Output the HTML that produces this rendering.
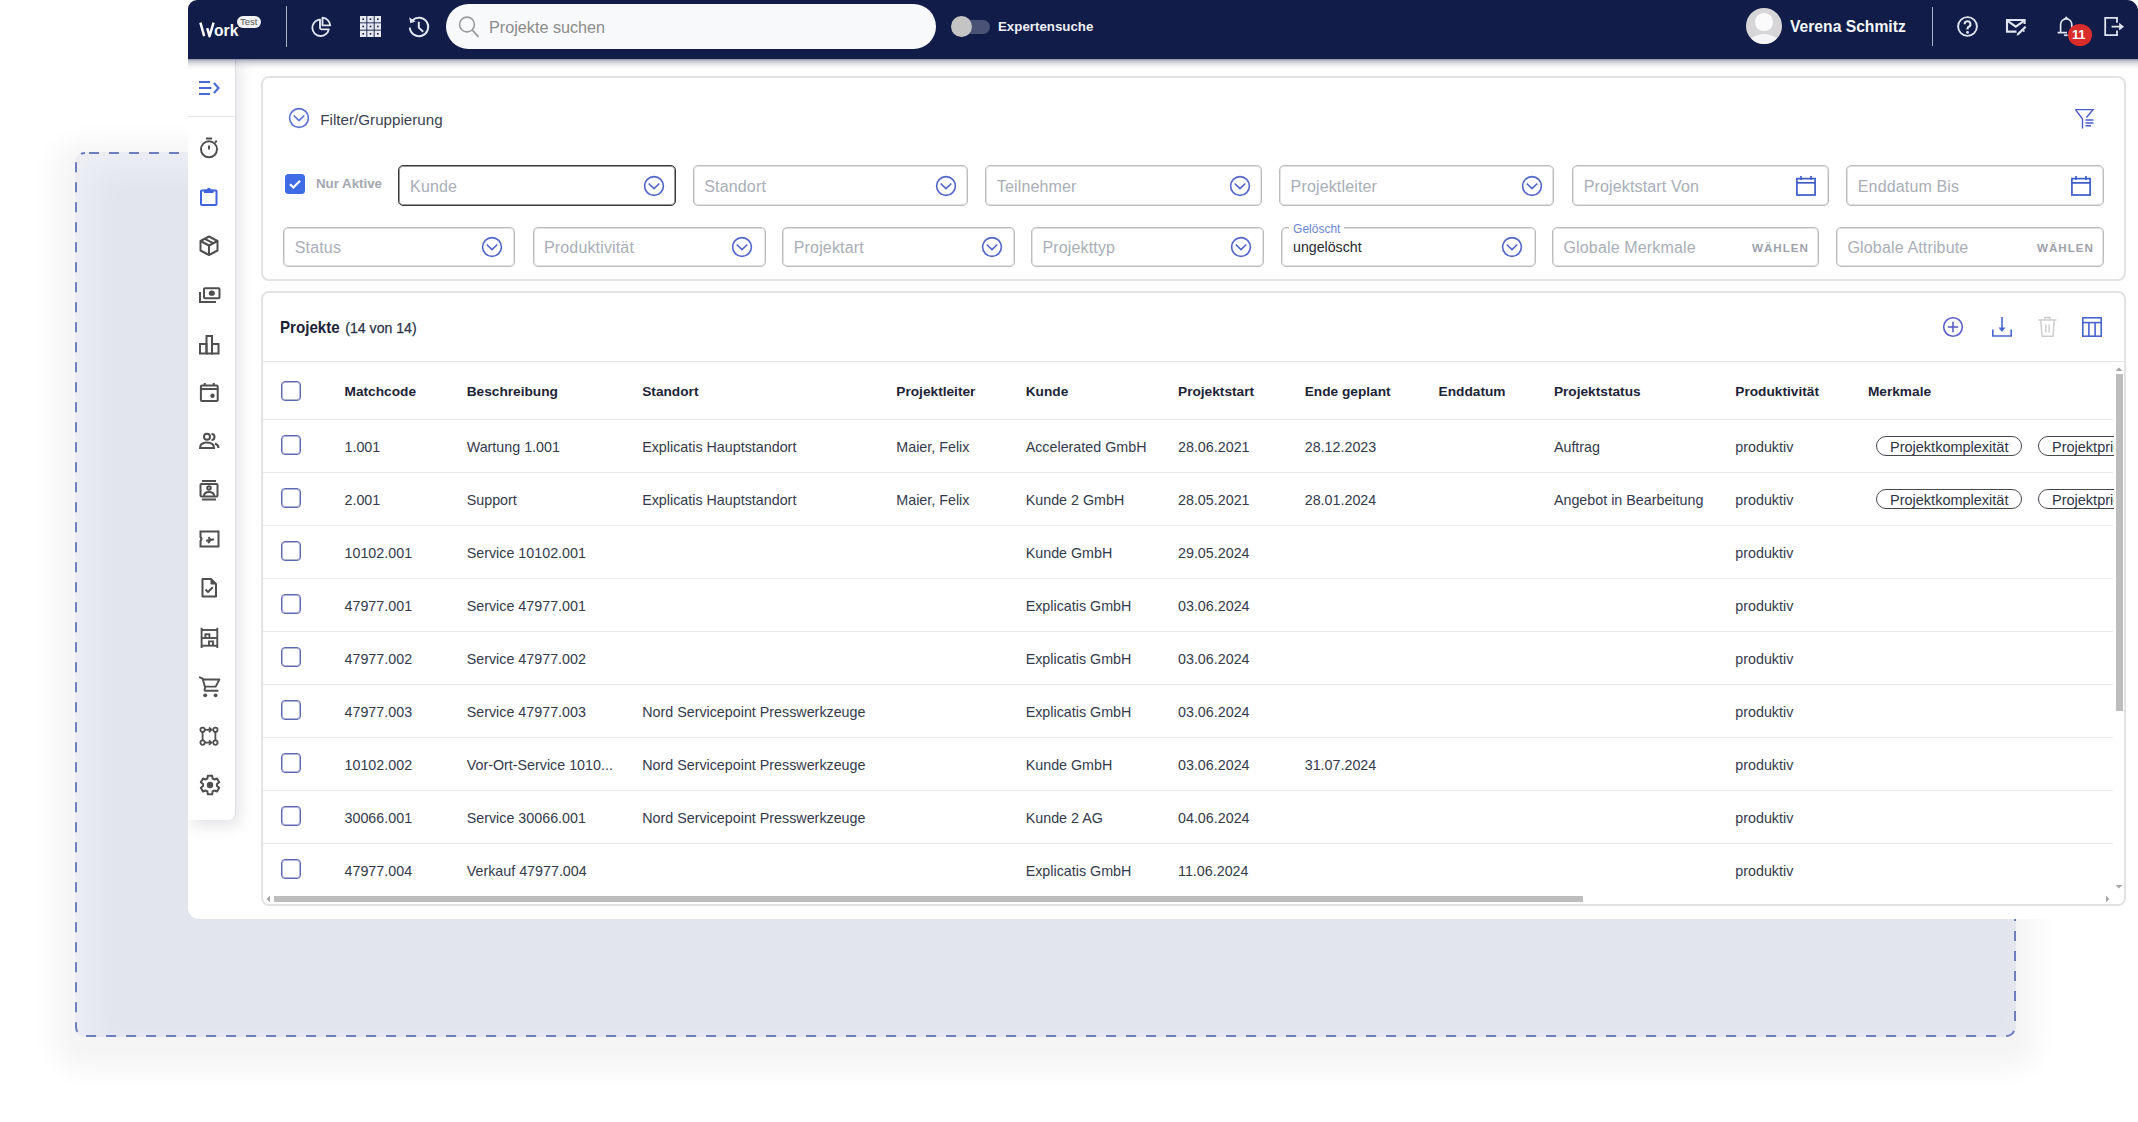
<!DOCTYPE html>
<html><head><meta charset="utf-8">
<style>
*{box-sizing:border-box;margin:0;padding:0}
html,body{width:2138px;height:1122px;overflow:hidden;background:#fff;font-family:"Liberation Sans",sans-serif}
.abs{position:absolute}
.txt{position:absolute;white-space:nowrap}
#dash{position:absolute;left:75px;top:152px;width:1941px;height:885px;border-radius:10px;background:#e2e5ee;box-shadow:0 12px 26px 22px rgba(0,0,0,0.042), inset 14px 14px 34px rgba(255,255,255,0.4)}
#dash svg{position:absolute;left:0;top:0}
#win{position:absolute;left:188px;top:0;width:1950px;height:919px;background:#fff;border-radius:9px 11px 0 11px;overflow:hidden}
#hdr{position:absolute;left:0;top:0;width:1950px;height:59px;background:#111d48;z-index:5}
#hsh{position:absolute;left:0;top:59px;width:1950px;height:11px;background:linear-gradient(rgba(25,35,75,0.48),rgba(25,35,75,0.22) 25%,rgba(40,45,60,0.07) 60%,rgba(40,45,60,0))  ;z-index:6}
#side{position:absolute;left:0;top:59px;width:47px;height:761px;background:#fff;border-bottom-right-radius:6px;box-shadow:1px 0 0 0 #dcdde0, 4px 5px 16px 0 rgba(20,20,45,0.13);z-index:3}
</style></head><body>
<div id="dash"><svg width="1941" height="885"><rect x="1" y="1" width="1939" height="883" rx="9" ry="9" fill="none" stroke="#6e7dbd" stroke-width="2" stroke-dasharray="10 10" stroke-dashoffset="16"/></svg></div>
<div id="win">
  <div id="hdr">
    <!-- logo -->
    <svg class="abs" style="left:10px;top:20px" width="30" height="20" viewBox="0 0 30 20"><path d="M2.4 2.6 L6.2 16.2 M9.2 8.2 L11.5 16.2 L15.6 2.6" fill="none" stroke="#fbfbfd" stroke-width="2.5" stroke-linejoin="round"/></svg>
    <div class="txt" style="left:25.8px;top:21.9px;font-size:17px;line-height:17px;font-weight:bold;color:#fbfbfd;transform:scaleX(0.92);transform-origin:0 0">ork</div>
    <div class="abs" style="left:49px;top:16px;width:24px;height:12px;border-radius:6px;background:#f2f2f4"></div>
    <div class="txt" style="left:52px;top:16px;font-size:9.5px;color:#555;line-height:12px">Test</div>
    <div class="abs" style="left:98px;top:6px;width:1.2px;height:41px;background:#a9b1c9"></div>
    <!-- pie -->
    <svg class="abs" style="left:120.6px;top:14.6px" width="24" height="24" viewBox="0 0 24 24">
      <g fill="none" stroke="#dfe4f1" stroke-width="1.9" stroke-linejoin="round">
      <path d="M10 4.6 A8.3 8.3 0 1 0 19.8 14.4 H12.6 A1.6 1.6 0 0 1 11 12.8 V4.6 Z"/>
      <path d="M13.5 2.6 A8.6 8.6 0 0 1 21.2 10.4 H13.5 Z"/></g>
    </svg>
    <!-- grid -->
    <svg class="abs" style="left:172px;top:16px" width="21" height="21" viewBox="0 0 21 21">
      <g fill="#e6e9f2">
        <rect x="0" y="0" width="6.4" height="6.4"/><rect x="7.3" y="0" width="6.4" height="6.4"/><rect x="14.6" y="0" width="6.4" height="6.4"/>
        <rect x="0" y="7.3" width="6.4" height="6.4"/><rect x="7.3" y="7.3" width="6.4" height="6.4"/><rect x="14.6" y="7.3" width="6.4" height="6.4"/>
        <rect x="0" y="14.6" width="6.4" height="6.4"/><rect x="7.3" y="14.6" width="6.4" height="6.4"/><rect x="14.6" y="14.6" width="6.4" height="6.4"/>
      </g>
      <g fill="#111d48">
        <rect x="2.4" y="2.4" width="1.6" height="1.6"/><rect x="9.7" y="2.4" width="1.6" height="1.6"/><rect x="17" y="2.4" width="1.6" height="1.6"/>
        <rect x="2.4" y="9.7" width="1.6" height="1.6"/><rect x="9.7" y="9.7" width="1.6" height="1.6"/><rect x="17" y="9.7" width="1.6" height="1.6"/>
        <rect x="2.4" y="17" width="1.6" height="1.6"/><rect x="9.7" y="17" width="1.6" height="1.6"/><rect x="17" y="17" width="1.6" height="1.6"/>
      </g>
    </svg>
    <!-- history -->
    <svg class="abs" style="left:219.4px;top:14.6px" width="24" height="24" viewBox="0 0 24 24">
      <path d="M2.8 12.6 A9.2 9.2 0 1 0 5.4 5.5" fill="none" stroke="#dfe4f1" stroke-width="2"/>
      <path d="M2.2 2.2 L3.2 8.2 L8.6 6.4 Z" fill="#dfe4f1"/>
      <path d="M11.8 6.8 V12.6 L16.2 16.8" fill="none" stroke="#dfe4f1" stroke-width="2"/>
    </svg>
    <!-- search -->
    <div class="abs" style="left:258px;top:4px;width:490px;height:45px;border-radius:23px;background:#f8f9fb"></div>
    <svg class="abs" style="left:269px;top:14px" width="24" height="26" viewBox="0 0 24 26">
      <circle cx="10" cy="10.5" r="7.4" fill="none" stroke="#9a9a9a" stroke-width="1.6"/>
      <path d="M15.2 16 L21.5 22.8" stroke="#9a9a9a" stroke-width="1.8"/>
    </svg>
    <div class="txt" style="left:301px;top:18px;font-size:16.2px;color:#8b8b8b">Projekte suchen</div>
    <!-- toggle -->
    <div class="abs" style="left:772px;top:19.5px;width:30px;height:14px;border-radius:7px;background:#4a5376"></div>
    <div class="abs" style="left:762.5px;top:16px;width:21px;height:21px;border-radius:50%;background:#c4c4c4"></div>
    <div class="txt" style="left:810px;top:18.5px;font-size:13.3px;font-weight:bold;color:#eef0f6">Expertensuche</div>
    <!-- avatar -->
    <div class="abs" style="left:1558px;top:7.6px;width:36px;height:36px;border-radius:50%;background:#d6d6d8;overflow:hidden">
      <div class="abs" style="left:9px;top:5.5px;width:17.5px;height:17.5px;border-radius:50%;background:#fbfbfc"></div>
      <div class="abs" style="left:2px;top:26px;width:32px;height:24px;border-radius:50%;background:#f6f6f8"></div>
    </div>
    <div class="txt" style="left:1602px;top:17.3px;font-size:16.4px;font-weight:bold;color:#f4f6fb;transform:scaleX(0.955);transform-origin:0 0">Verena Schmitz</div>
    <div class="abs" style="left:1744px;top:7px;width:1.2px;height:39px;background:#a9b1c9"></div>
    <!-- help -->
    <svg class="abs" style="left:1767px;top:14px" width="25" height="25" viewBox="0 0 25 25">
      <circle cx="12.5" cy="12.5" r="9.4" fill="none" stroke="#dfe4f1" stroke-width="1.9"/>
      <path d="M9.6 10.3 A2.9 2.9 0 1 1 13.4 12.9 Q12.5 13.5 12.5 14.8 V15.6" fill="none" stroke="#dfe4f1" stroke-width="2.1"/>
      <circle cx="12.5" cy="18.4" r="1.45" fill="#dfe4f1"/>
    </svg>
    <!-- mail -->
    <svg class="abs" style="left:1816px;top:16px" width="24" height="22" viewBox="0 0 24 22">
      <path d="M20.6 8 V4 H3 V15.6 H12.5" fill="none" stroke="#dfe4f1" stroke-width="2.1"/>
      <path d="M3.6 4.8 L11.8 10.6 L20 4.8" fill="none" stroke="#dfe4f1" stroke-width="2.1"/>
      <path d="M13.8 18.4 L21.6 10.8" fill="none" stroke="#dfe4f1" stroke-width="2.2"/>
      <path d="M12.6 19.8 L13.2 17.6 L14.6 19 Z" fill="#dfe4f1"/>
      <rect x="18.8" y="14.2" width="1.8" height="1.6" fill="#dfe4f1"/>
    </svg>
    <!-- bell -->
    <svg class="abs" style="left:1869.2px;top:14px" width="20" height="26" viewBox="0 0 20 26">
      <path d="M3.6 18.8 V10.6 A5.6 5.8 0 0 1 14.8 10.6 V18.8" fill="none" stroke="#dfe4f1" stroke-width="1.7"/>
      <path d="M0.6 18.6 H10" stroke="#dfe4f1" stroke-width="1.7"/>
      <path d="M7.2 20.5 A2 2 0 0 0 10.5 20.5" fill="none" stroke="#dfe4f1" stroke-width="1.6"/>
      <path d="M9.2 2.2 L11.6 5 H6.8Z" fill="#dfe4f1"/>
    </svg>
    <div class="abs" style="left:1879.5px;top:24.2px;width:24.3px;height:21.6px;border-radius:50%;background:#d92d2b"></div>
    <div class="txt" style="left:1884px;top:27px;font-size:13px;font-weight:bold;color:#fff;letter-spacing:-0.2px">11</div>
    <!-- logout -->
    <svg class="abs" style="left:1915px;top:16px" width="22" height="22" viewBox="0 0 22 22">
      <path d="M14 6.8 V1.8 H2.2 V19.2 H14 V14.5" fill="none" stroke="#dfe4f1" stroke-width="1.8"/>
      <path d="M8.6 10.7 H18.5" stroke="#dfe4f1" stroke-width="1.8"/>
      <path d="M16.2 6.8 L21 10.7 L16.2 14.6 Z" fill="#dfe4f1"/>
    </svg>
  </div>
<div id="hsh"></div>
  <div id="side">
    <div class="abs" style="left:0;top:57px;width:47px;height:1px;background:#e6e6e8"></div>
    <svg class="abs" style="left:10px;top:20px" width="22" height="18" viewBox="0 0 22 18">
      <g stroke="#4b69d2" stroke-width="2.1" fill="none">
      <path d="M1 3 H12"/><path d="M1 9 H13.5"/><path d="M1 15 H12"/><path d="M16 4 L20.5 9 L16 14"/></g>
    </svg>
    <g></g>
    <!-- timer -->
    <svg class="abs" style="left:11px;top:78px" width="22" height="22" viewBox="0 0 22 22">
      <g stroke="#4f4f4f" stroke-width="2" fill="none">
      <circle cx="10" cy="12.3" r="8"/><path d="M7 1.5 H13"/><path d="M10 8.5 V12.5"/><path d="M16 5.5 L17.8 3.7"/></g>
    </svg>
    <!-- clipboard -->
    <svg class="abs" style="left:11px;top:127px" width="22" height="22" viewBox="0 0 22 22">
      <g stroke="#3f64dd" stroke-width="2" fill="none">
      <rect x="2" y="4.5" width="15.5" height="14.5" rx="0.8"/></g>
      <path d="M5 3.5 H8 A1.8 1.8 0 0 1 11.6 3.5 H14.5 V7 H5 Z" fill="#3f64dd"/>
    </svg>
    <!-- box -->
    <svg class="abs" style="left:11px;top:176px" width="22" height="22" viewBox="0 0 22 22">
      <g stroke="#4f4f4f" stroke-width="2" fill="none" stroke-linejoin="round">
      <path d="M10 1.5 L18.5 6 V15.5 L10 20 L1.5 15.5 V6 Z"/><path d="M1.5 6 L10 10.5 L18.5 6"/><path d="M10 10.5 V20"/><path d="M5.8 3.8 L14.2 8.2"/></g>
    </svg>
    <!-- money -->
    <svg class="abs" style="left:11px;top:228px" width="22" height="18" viewBox="0 0 22 18">
      <g stroke="#4f4f4f" stroke-width="2" fill="none">
      <rect x="5" y="1.2" width="15.5" height="10" rx="1"/><path d="M1 5 V15 H17"/></g>
      <ellipse cx="12.8" cy="6.2" rx="3" ry="2.6" fill="#4f4f4f"/>
    </svg>
    <!-- chart -->
    <svg class="abs" style="left:11px;top:275px" width="22" height="22" viewBox="0 0 22 22">
      <g stroke="#4f4f4f" stroke-width="2" fill="none">
      <rect x="1" y="10" width="6.5" height="9.5"/><rect x="7.5" y="2" width="5.5" height="17.5"/><rect x="13" y="10" width="6.5" height="9.5"/></g>
    </svg>
    <!-- calendar -->
    <svg class="abs" style="left:11px;top:323px" width="22" height="22" viewBox="0 0 22 22">
      <g stroke="#4f4f4f" stroke-width="2" fill="none">
      <rect x="1.9" y="3.5" width="16.8" height="15.6" rx="1"/><path d="M1.9 7 H18.7"/><path d="M5.8 1 V4"/><path d="M14.8 1 V4"/></g>
      <circle cx="13.5" cy="13.8" r="2.2" fill="#4f4f4f"/>
    </svg>
    <!-- people -->
    <svg class="abs" style="left:11px;top:373px" width="22" height="20" viewBox="0 0 22 20">
      <g stroke="#4f4f4f" stroke-width="2" fill="none">
      <circle cx="8" cy="4.8" r="3"/><path d="M1 16 Q1 10.5 8 10.5 Q15 10.5 15 16 Z"/><path d="M12.5 2 A3 3 0 0 1 12.5 8"/><path d="M16 11.5 Q19.5 13 19.5 16"/></g>
    </svg>
    <!-- contact -->
    <svg class="abs" style="left:11px;top:421px" width="22" height="22" viewBox="0 0 22 22">
      <g stroke="#4f4f4f" stroke-width="2" fill="none">
      <path d="M3 1 H17"/><rect x="1.5" y="4" width="17" height="12.5" rx="1"/><path d="M3 19.5 H17"/><circle cx="10" cy="8" r="1.8"/><path d="M5 16 Q5 12 10 12 Q15 12 15 16"/></g>
    </svg>
    <!-- ticket -->
    <svg class="abs" style="left:11px;top:471px" width="22" height="20" viewBox="0 0 22 20">
      <g stroke="#4f4f4f" stroke-width="2" fill="none">
      <path d="M1.5 1.5 H19.5 V16.5 H1.5 V11 Q3.5 9 1.5 7 Z"/><path d="M7 10.8 L15 9.2"/><path d="M9.5 7 L11.5 10 L9 13"/></g>
    </svg>
    <!-- doc check -->
    <svg class="abs" style="left:11px;top:518px" width="22" height="22" viewBox="0 0 22 22">
      <g stroke="#4f4f4f" stroke-width="2" fill="none" stroke-linejoin="round">
      <path d="M3.5 2 H12 L17 7 V19.5 H3.5 Z"/><path d="M6.5 12.5 L9 15 L13.8 10.2"/></g>
      <path d="M11.5 2 L17 7.5 H11.5 Z" fill="#4f4f4f"/>
    </svg>
    <!-- shelves -->
    <svg class="abs" style="left:11px;top:568px" width="22" height="22" viewBox="0 0 22 22">
      <g stroke="#505050" stroke-width="1.9" fill="none">
      <path d="M2.6 0.8 V21"/><path d="M18.3 0.8 V21"/><path d="M2.6 3 H18.3"/><path d="M2.6 11 H18.3"/><path d="M2.6 18.7 H18.3"/><path d="M6.4 11 V7.2 H10.4 V11"/><path d="M10 18.7 V14.4 H14 V18.7"/></g>
    </svg>
    <!-- cart -->
    <svg class="abs" style="left:11px;top:617px" width="22" height="22" viewBox="0 0 22 22">
      <g stroke="#505050" stroke-width="1.9" fill="none" stroke-linejoin="round" stroke-linecap="round">
      <path d="M0.8 1.3 L3.6 2.6 L6 11 Q6.4 12.2 5.6 13.4 Q5.2 14.8 6.6 14.8 H18.6"/><path d="M4.4 3.5 H20.4 L16.7 10.6 H6.2"/></g>
      <circle cx="6.2" cy="19.3" r="1.9" fill="#505050"/><circle cx="16.6" cy="19.3" r="1.9" fill="#505050"/>
    </svg>
    <!-- flow -->
    <svg class="abs" style="left:11px;top:667px" width="22" height="22" viewBox="0 0 22 22">
      <g stroke="#4f4f4f" stroke-width="1.8" fill="none">
      <circle cx="3.6" cy="3.8" r="2.2"/><circle cx="3.6" cy="16.6" r="2.2"/><circle cx="16.4" cy="3.8" r="2.2"/><circle cx="16.4" cy="16.6" r="2.2"/>
      <path d="M3.6 6 V14.4"/><path d="M16.4 6 V14.4"/><path d="M5.8 3.8 H12"/><path d="M5.8 16.6 H12"/><path d="M10 1.5 L12.4 3.8 L10 6.1"/><path d="M10 14.3 L12.4 16.6 L10 18.9"/></g>
    </svg>
    <!-- gear -->
    <svg class="abs" style="left:9.5px;top:714px" width="24" height="24" viewBox="0 0 24 24">
      <path d="M9.38 5.51 L9.84 2.65 L14.16 2.65 L14.62 5.51 L16.31 6.48 L19.02 5.45 L21.18 9.19 L18.93 11.03 L18.93 12.97 L21.18 14.81 L19.02 18.55 L16.31 17.52 L14.62 18.49 L14.16 21.35 L9.84 21.35 L9.38 18.49 L7.69 17.52 L4.98 18.55 L2.82 14.81 L5.07 12.97 L5.07 11.03 L2.82 9.19 L4.98 5.45 L7.69 6.48 Z" fill="none" stroke="#4f4f4f" stroke-width="2" stroke-linejoin="round"/>
      <circle cx="12" cy="12" r="3.2" fill="#4f4f4f"/>
    </svg>
  </div>
<div class="abs" style="left:73.00px;top:76.00px;width:1865.00px;height:205.00px;border:2px solid #e3e3e5;border-radius:8px;background:#fff"></div>
<svg class="abs" style="left:100.00px;top:107.00px" width="22" height="22" viewBox="0 0 22 22"><circle cx="11" cy="11" r="9.4" fill="none" stroke="#5a72cf" stroke-width="1.6"/><path d="M5.7 8.5 L11 13.7 L16.3 8.5" fill="none" stroke="#5a72cf" stroke-width="1.65"/></svg>
<div class="txt" style="left:132.30px;top:111.93px;font-size:15.2px;line-height:15.2px;color:#3b4152;">Filter/Gruppierung</div>
<svg class="abs" style="left:1886px;top:108px" width="22" height="22" viewBox="0 0 22 22"><g fill="none" stroke="#4a5cc8" stroke-width="1.4"><path d="M1.5 1.6 H19 L12.5 9.5"/><path d="M1.5 1.6 L8.5 11 V20.5"/><path d="M11.5 12 H19.5"/><path d="M11.5 15 H19.5"/><path d="M11.5 17.8 H17"/></g></svg>
<div class="abs" style="left:97.30px;top:174.00px;width:20.00px;height:20.00px;background:#3e6be6;border-radius:3.5px"></div>
<svg class="abs" style="left:97.30000000000001px;top:174px" width="20" height="20" viewBox="0 0 20 20"><path d="M5 10.2 L8.4 13.5 L15 6.8" fill="none" stroke="#fff" stroke-width="2.2"/></svg>
<div class="txt" style="left:128.00px;top:177.34px;font-size:13.3px;line-height:13.3px;color:#a3a7b0;font-weight:bold;">Nur Aktive</div>
<div class="abs" style="left:210.30px;top:165.40px;width:277.70px;height:40.50px;border:1px solid #3c3c3e;box-shadow:inset 0 0 0 1px rgba(70,70,72,0.55);border-radius:5px;background:#fff"></div>
<div class="txt" style="left:222.10px;top:178.96px;font-size:16px;line-height:16px;color:#a9aeb8;letter-spacing:0.15px;">Kunde</div>
<svg class="abs" style="left:454.50px;top:175.00px" width="22" height="22" viewBox="0 0 22 22"><circle cx="11" cy="11" r="9.4" fill="none" stroke="#5366c8" stroke-width="1.6"/><path d="M5.7 8.5 L11 13.7 L16.3 8.5" fill="none" stroke="#5366c8" stroke-width="1.65"/></svg>
<div class="abs" style="left:504.50px;top:165.40px;width:275.80px;height:40.50px;border:1px solid #bdbdc0;box-shadow:inset 0 0 0 1px rgba(200,200,203,0.55);border-radius:5px;background:#fff"></div>
<div class="txt" style="left:516.30px;top:178.96px;font-size:16px;line-height:16px;color:#a9aeb8;letter-spacing:0.15px;">Standort</div>
<svg class="abs" style="left:746.80px;top:175.00px" width="22" height="22" viewBox="0 0 22 22"><circle cx="11" cy="11" r="9.4" fill="none" stroke="#5366c8" stroke-width="1.6"/><path d="M5.7 8.5 L11 13.7 L16.3 8.5" fill="none" stroke="#5366c8" stroke-width="1.65"/></svg>
<div class="abs" style="left:797.00px;top:165.40px;width:277.00px;height:40.50px;border:1px solid #bdbdc0;box-shadow:inset 0 0 0 1px rgba(200,200,203,0.55);border-radius:5px;background:#fff"></div>
<div class="txt" style="left:808.80px;top:178.96px;font-size:16px;line-height:16px;color:#a9aeb8;letter-spacing:0.15px;">Teilnehmer</div>
<svg class="abs" style="left:1040.50px;top:175.00px" width="22" height="22" viewBox="0 0 22 22"><circle cx="11" cy="11" r="9.4" fill="none" stroke="#5366c8" stroke-width="1.6"/><path d="M5.7 8.5 L11 13.7 L16.3 8.5" fill="none" stroke="#5366c8" stroke-width="1.65"/></svg>
<div class="abs" style="left:1090.80px;top:165.40px;width:275.60px;height:40.50px;border:1px solid #bdbdc0;box-shadow:inset 0 0 0 1px rgba(200,200,203,0.55);border-radius:5px;background:#fff"></div>
<div class="txt" style="left:1102.60px;top:178.96px;font-size:16px;line-height:16px;color:#a9aeb8;letter-spacing:0.15px;">Projektleiter</div>
<svg class="abs" style="left:1332.90px;top:175.00px" width="22" height="22" viewBox="0 0 22 22"><circle cx="11" cy="11" r="9.4" fill="none" stroke="#5366c8" stroke-width="1.6"/><path d="M5.7 8.5 L11 13.7 L16.3 8.5" fill="none" stroke="#5366c8" stroke-width="1.65"/></svg>
<div class="abs" style="left:1383.90px;top:165.40px;width:257.50px;height:40.50px;border:1px solid #bdbdc0;box-shadow:inset 0 0 0 1px rgba(200,200,203,0.55);border-radius:5px;background:#fff"></div>
<div class="txt" style="left:1395.70px;top:178.96px;font-size:16px;line-height:16px;color:#a9aeb8;letter-spacing:0.15px;">Projektstart Von</div>
<svg class="abs" style="left:1607.90px;top:176.00px" width="20" height="20" viewBox="0 0 20 20"><g fill="none" stroke="#3d5cc6" stroke-width="1.7"><rect x="0.9" y="2.6" width="18.2" height="16.4"/><path d="M0.9 6.8 H19.1"/><path d="M5 0 V4"/><path d="M15 0 V4"/></g></svg>
<div class="abs" style="left:1658.00px;top:165.40px;width:258.00px;height:40.50px;border:1px solid #bdbdc0;box-shadow:inset 0 0 0 1px rgba(200,200,203,0.55);border-radius:5px;background:#fff"></div>
<div class="txt" style="left:1669.80px;top:178.96px;font-size:16px;line-height:16px;color:#a9aeb8;letter-spacing:0.15px;">Enddatum Bis</div>
<svg class="abs" style="left:1882.50px;top:176.00px" width="20" height="20" viewBox="0 0 20 20"><g fill="none" stroke="#3d5cc6" stroke-width="1.7"><rect x="0.9" y="2.6" width="18.2" height="16.4"/><path d="M0.9 6.8 H19.1"/><path d="M5 0 V4"/><path d="M15 0 V4"/></g></svg>
<div class="abs" style="left:95.30px;top:226.90px;width:232.20px;height:40.30px;border:1px solid #bdbdc0;box-shadow:inset 0 0 0 1px rgba(200,200,203,0.55);border-radius:5px;background:#fff"></div>
<div class="txt" style="left:106.80px;top:240.06px;font-size:16px;line-height:16px;color:#a9aeb8;letter-spacing:0.15px;">Status</div>
<svg class="abs" style="left:293.00px;top:236.00px" width="22" height="22" viewBox="0 0 22 22"><circle cx="11" cy="11" r="9.4" fill="none" stroke="#5366c8" stroke-width="1.6"/><path d="M5.7 8.5 L11 13.7 L16.3 8.5" fill="none" stroke="#5366c8" stroke-width="1.65"/></svg>
<div class="abs" style="left:344.50px;top:226.90px;width:233.00px;height:40.30px;border:1px solid #bdbdc0;box-shadow:inset 0 0 0 1px rgba(200,200,203,0.55);border-radius:5px;background:#fff"></div>
<div class="txt" style="left:356.00px;top:240.06px;font-size:16px;line-height:16px;color:#a9aeb8;letter-spacing:0.15px;">Produktivität</div>
<svg class="abs" style="left:543.00px;top:236.00px" width="22" height="22" viewBox="0 0 22 22"><circle cx="11" cy="11" r="9.4" fill="none" stroke="#5366c8" stroke-width="1.6"/><path d="M5.7 8.5 L11 13.7 L16.3 8.5" fill="none" stroke="#5366c8" stroke-width="1.65"/></svg>
<div class="abs" style="left:594.30px;top:226.90px;width:232.70px;height:40.30px;border:1px solid #bdbdc0;box-shadow:inset 0 0 0 1px rgba(200,200,203,0.55);border-radius:5px;background:#fff"></div>
<div class="txt" style="left:605.80px;top:240.06px;font-size:16px;line-height:16px;color:#a9aeb8;letter-spacing:0.15px;">Projektart</div>
<svg class="abs" style="left:792.50px;top:236.00px" width="22" height="22" viewBox="0 0 22 22"><circle cx="11" cy="11" r="9.4" fill="none" stroke="#5366c8" stroke-width="1.6"/><path d="M5.7 8.5 L11 13.7 L16.3 8.5" fill="none" stroke="#5366c8" stroke-width="1.65"/></svg>
<div class="abs" style="left:843.00px;top:226.90px;width:233.00px;height:40.30px;border:1px solid #bdbdc0;box-shadow:inset 0 0 0 1px rgba(200,200,203,0.55);border-radius:5px;background:#fff"></div>
<div class="txt" style="left:854.50px;top:240.06px;font-size:16px;line-height:16px;color:#a9aeb8;letter-spacing:0.15px;">Projekttyp</div>
<svg class="abs" style="left:1041.50px;top:236.00px" width="22" height="22" viewBox="0 0 22 22"><circle cx="11" cy="11" r="9.4" fill="none" stroke="#5366c8" stroke-width="1.6"/><path d="M5.7 8.5 L11 13.7 L16.3 8.5" fill="none" stroke="#5366c8" stroke-width="1.65"/></svg>
<div class="abs" style="left:1092.50px;top:226.90px;width:255.00px;height:40.30px;border:1px solid #bdbdc0;box-shadow:inset 0 0 0 1px rgba(200,200,203,0.55);border-radius:5px;background:#fff"></div>
<svg class="abs" style="left:1313.00px;top:236.00px" width="22" height="22" viewBox="0 0 22 22"><circle cx="11" cy="11" r="9.4" fill="none" stroke="#5366c8" stroke-width="1.6"/><path d="M5.7 8.5 L11 13.7 L16.3 8.5" fill="none" stroke="#5366c8" stroke-width="1.65"/></svg>
<div class="abs" style="left:1364.00px;top:226.90px;width:267.00px;height:40.30px;border:1px solid #bdbdc0;box-shadow:inset 0 0 0 1px rgba(200,200,203,0.55);border-radius:5px;background:#fff"></div>
<div class="txt" style="left:1375.50px;top:240.06px;font-size:16px;line-height:16px;color:#a9aeb8;letter-spacing:0.15px;">Globale Merkmale</div>
<div class="txt" style="left:1564.00px;top:241.98px;font-size:11.6px;line-height:11.6px;color:#9ea2ab;font-weight:bold;letter-spacing:1.0px;">WÄHLEN</div>
<div class="abs" style="left:1648.00px;top:226.90px;width:268.00px;height:40.30px;border:1px solid #bdbdc0;box-shadow:inset 0 0 0 1px rgba(200,200,203,0.55);border-radius:5px;background:#fff"></div>
<div class="txt" style="left:1659.50px;top:240.06px;font-size:16px;line-height:16px;color:#a9aeb8;letter-spacing:0.15px;">Globale Attribute</div>
<div class="txt" style="left:1849.00px;top:241.98px;font-size:11.6px;line-height:11.6px;color:#9ea2ab;font-weight:bold;letter-spacing:1.0px;">WÄHLEN</div>
<div class="abs" style="left:1101.00px;top:224.00px;width:55.00px;height:6.00px;background:#fff"></div>
<div class="txt" style="left:1105.10px;top:222.84px;font-size:12px;line-height:12px;color:#6b86d8;">Gelöscht</div>
<div class="txt" style="left:1105.00px;top:240.18px;font-size:14.2px;line-height:14.2px;color:#26282e;">ungelöscht</div>
<div class="abs" style="left:73.00px;top:291.00px;width:1865.00px;height:615.00px;border:2px solid #e3e3e5;border-radius:8px;background:#fff"></div>
<div class="txt" style="left:91.50px;top:318.90px;font-size:16.3px;line-height:16.3px;color:#1b2236;font-weight:bold;transform:scaleX(0.93);transform-origin:0 0;">Projekte</div>
<div class="txt" style="left:157.30px;top:320.86px;font-size:14.1px;line-height:14.1px;color:#2a3248;-webkit-text-stroke:0.25px #2a3248;">(14 von 14)</div>
<div class="abs" style="left:75.00px;top:360.50px;width:1861.00px;height:1.60px;background:#e6e7ea"></div>
<svg class="abs" style="left:1754px;top:315.5px" width="22" height="22" viewBox="0 0 22 22"><g fill="none" stroke="#5860c9" stroke-width="1.6"><circle cx="11" cy="11" r="9.3"/><path d="M11 5.8 V16.2"/><path d="M5.8 11 H16.2"/></g></svg>
<svg class="abs" style="left:1803px;top:315.5px" width="22" height="22" viewBox="0 0 22 22"><g fill="none" stroke="#4a68d0" stroke-width="1.6"><path d="M1.8 13.5 V20 H20.2 V13.5"/><path d="M11 1 V15"/></g><path d="M7.5 11.5 L11 16 L14.5 11.5 Z" fill="#4a68d0"/></svg>
<svg class="abs" style="left:1849px;top:315.5px" width="22" height="22" viewBox="0 0 22 22"><g fill="none" stroke="#cdcdcf" stroke-width="1.5"><path d="M1.5 4 H19.5"/><path d="M8 4 V1.6 H13 V4"/><path d="M3.8 4.5 L5 20.3 H16 L17.2 4.5"/><path d="M8.8 8.5 V16.5"/><path d="M12.2 8.5 V16.5"/></g></svg>
<svg class="abs" style="left:1893px;top:315.5px" width="22" height="22" viewBox="0 0 22 22"><g fill="none" stroke="#4a63cf" stroke-width="1.6"><rect x="1.8" y="1.8" width="18.4" height="18.4"/><path d="M1.8 6.6 H20.2"/><path d="M7.9 6.6 V20.2"/><path d="M14.1 6.6 V20.2"/></g></svg>
<div class="abs" style="left:93.30px;top:381.00px;width:19.60px;height:19.80px;border:1px solid #5c6ab0;box-shadow:inset 0 0 0 1px rgba(110,122,185,0.55);border-radius:4px;background:#fff"></div>
<div class="txt" style="left:156.50px;top:385.40px;font-size:13.7px;line-height:13.7px;color:#1d2336;font-weight:bold;">Matchcode</div>
<div class="txt" style="left:278.70px;top:384.70px;font-size:13.7px;line-height:13.7px;color:#1d2336;font-weight:bold;">Beschreibung</div>
<div class="txt" style="left:454.20px;top:384.70px;font-size:13.7px;line-height:13.7px;color:#1d2336;font-weight:bold;">Standort</div>
<div class="txt" style="left:708.30px;top:384.70px;font-size:13.7px;line-height:13.7px;color:#1d2336;font-weight:bold;">Projektleiter</div>
<div class="txt" style="left:837.70px;top:384.70px;font-size:13.7px;line-height:13.7px;color:#1d2336;font-weight:bold;">Kunde</div>
<div class="txt" style="left:990.00px;top:384.70px;font-size:13.7px;line-height:13.7px;color:#1d2336;font-weight:bold;">Projektstart</div>
<div class="txt" style="left:1116.70px;top:384.70px;font-size:13.7px;line-height:13.7px;color:#1d2336;font-weight:bold;">Ende geplant</div>
<div class="txt" style="left:1250.60px;top:384.70px;font-size:13.7px;line-height:13.7px;color:#1d2336;font-weight:bold;">Enddatum</div>
<div class="txt" style="left:1365.90px;top:384.70px;font-size:13.7px;line-height:13.7px;color:#1d2336;font-weight:bold;">Projektstatus</div>
<div class="txt" style="left:1547.30px;top:384.70px;font-size:13.7px;line-height:13.7px;color:#1d2336;font-weight:bold;">Produktivität</div>
<div class="txt" style="left:1679.90px;top:384.70px;font-size:13.7px;line-height:13.7px;color:#1d2336;font-weight:bold;">Merkmale</div>
<div class="abs" style="left:75.00px;top:418.50px;width:1850.00px;height:1.40px;background:#e9e9eb"></div>
<div class="abs" style="left:93.30px;top:435.00px;width:19.60px;height:19.80px;border:1px solid #5c6ab0;box-shadow:inset 0 0 0 1px rgba(110,122,185,0.55);border-radius:4px;background:#fff"></div>
<div class="txt" style="left:156.50px;top:440.10px;font-size:14.3px;line-height:14.3px;color:#343a4c;">1.001</div>
<div class="txt" style="left:278.70px;top:440.10px;font-size:14.3px;line-height:14.3px;color:#343a4c;">Wartung 1.001</div>
<div class="txt" style="left:454.20px;top:440.10px;font-size:14.3px;line-height:14.3px;color:#343a4c;">Explicatis Hauptstandort</div>
<div class="txt" style="left:708.30px;top:440.10px;font-size:14.3px;line-height:14.3px;color:#343a4c;">Maier, Felix</div>
<div class="txt" style="left:837.70px;top:440.10px;font-size:14.3px;line-height:14.3px;color:#343a4c;">Accelerated GmbH</div>
<div class="txt" style="left:990.00px;top:440.10px;font-size:14.3px;line-height:14.3px;color:#343a4c;">28.06.2021</div>
<div class="txt" style="left:1116.70px;top:440.10px;font-size:14.3px;line-height:14.3px;color:#343a4c;">28.12.2023</div>
<div class="txt" style="left:1365.90px;top:440.10px;font-size:14.3px;line-height:14.3px;color:#343a4c;">Auftrag</div>
<div class="txt" style="left:1547.30px;top:440.10px;font-size:14.3px;line-height:14.3px;color:#343a4c;">produktiv</div>
<div class="abs" style="left:1687.80px;top:436.00px;width:146.00px;height:20.00px;border:1.5px solid #45494f;border-radius:10px;background:#fff"></div>
<div class="txt" style="left:1702.00px;top:439.93px;font-size:14.5px;line-height:14.5px;color:#2e3445;">Projektkomplexität</div>
<div class="abs" style="left:1850.00px;top:435.00px;width:75.5px;height:22px;overflow:hidden"><div class="abs" style="left:0;top:1px;width:120px;height:20px;border:1.5px solid #45494f;border-radius:10px;background:#fff"></div><div class="txt" style="left:14px;top:4.93px;font-size:14.5px;line-height:14.5px;color:#2e3445">Projektpriorität</div></div>
<div class="abs" style="left:75.00px;top:471.50px;width:1850.00px;height:1.40px;background:#e9e9eb"></div>
<div class="abs" style="left:93.30px;top:488.00px;width:19.60px;height:19.80px;border:1px solid #5c6ab0;box-shadow:inset 0 0 0 1px rgba(110,122,185,0.55);border-radius:4px;background:#fff"></div>
<div class="txt" style="left:156.50px;top:493.10px;font-size:14.3px;line-height:14.3px;color:#343a4c;">2.001</div>
<div class="txt" style="left:278.70px;top:493.10px;font-size:14.3px;line-height:14.3px;color:#343a4c;">Support</div>
<div class="txt" style="left:454.20px;top:493.10px;font-size:14.3px;line-height:14.3px;color:#343a4c;">Explicatis Hauptstandort</div>
<div class="txt" style="left:708.30px;top:493.10px;font-size:14.3px;line-height:14.3px;color:#343a4c;">Maier, Felix</div>
<div class="txt" style="left:837.70px;top:493.10px;font-size:14.3px;line-height:14.3px;color:#343a4c;">Kunde 2 GmbH</div>
<div class="txt" style="left:990.00px;top:493.10px;font-size:14.3px;line-height:14.3px;color:#343a4c;">28.05.2021</div>
<div class="txt" style="left:1116.70px;top:493.10px;font-size:14.3px;line-height:14.3px;color:#343a4c;">28.01.2024</div>
<div class="txt" style="left:1365.90px;top:493.10px;font-size:14.3px;line-height:14.3px;color:#343a4c;">Angebot in Bearbeitung</div>
<div class="txt" style="left:1547.30px;top:493.10px;font-size:14.3px;line-height:14.3px;color:#343a4c;">produktiv</div>
<div class="abs" style="left:1687.80px;top:489.00px;width:146.00px;height:20.00px;border:1.5px solid #45494f;border-radius:10px;background:#fff"></div>
<div class="txt" style="left:1702.00px;top:492.93px;font-size:14.5px;line-height:14.5px;color:#2e3445;">Projektkomplexität</div>
<div class="abs" style="left:1850.00px;top:488.00px;width:75.5px;height:22px;overflow:hidden"><div class="abs" style="left:0;top:1px;width:120px;height:20px;border:1.5px solid #45494f;border-radius:10px;background:#fff"></div><div class="txt" style="left:14px;top:4.93px;font-size:14.5px;line-height:14.5px;color:#2e3445">Projektpriorität</div></div>
<div class="abs" style="left:75.00px;top:524.50px;width:1850.00px;height:1.40px;background:#e9e9eb"></div>
<div class="abs" style="left:93.30px;top:541.00px;width:19.60px;height:19.80px;border:1px solid #5c6ab0;box-shadow:inset 0 0 0 1px rgba(110,122,185,0.55);border-radius:4px;background:#fff"></div>
<div class="txt" style="left:156.50px;top:546.10px;font-size:14.3px;line-height:14.3px;color:#343a4c;">10102.001</div>
<div class="txt" style="left:278.70px;top:546.10px;font-size:14.3px;line-height:14.3px;color:#343a4c;">Service 10102.001</div>
<div class="txt" style="left:837.70px;top:546.10px;font-size:14.3px;line-height:14.3px;color:#343a4c;">Kunde GmbH</div>
<div class="txt" style="left:990.00px;top:546.10px;font-size:14.3px;line-height:14.3px;color:#343a4c;">29.05.2024</div>
<div class="txt" style="left:1547.30px;top:546.10px;font-size:14.3px;line-height:14.3px;color:#343a4c;">produktiv</div>
<div class="abs" style="left:75.00px;top:577.50px;width:1850.00px;height:1.40px;background:#e9e9eb"></div>
<div class="abs" style="left:93.30px;top:594.00px;width:19.60px;height:19.80px;border:1px solid #5c6ab0;box-shadow:inset 0 0 0 1px rgba(110,122,185,0.55);border-radius:4px;background:#fff"></div>
<div class="txt" style="left:156.50px;top:599.10px;font-size:14.3px;line-height:14.3px;color:#343a4c;">47977.001</div>
<div class="txt" style="left:278.70px;top:599.10px;font-size:14.3px;line-height:14.3px;color:#343a4c;">Service 47977.001</div>
<div class="txt" style="left:837.70px;top:599.10px;font-size:14.3px;line-height:14.3px;color:#343a4c;">Explicatis GmbH</div>
<div class="txt" style="left:990.00px;top:599.10px;font-size:14.3px;line-height:14.3px;color:#343a4c;">03.06.2024</div>
<div class="txt" style="left:1547.30px;top:599.10px;font-size:14.3px;line-height:14.3px;color:#343a4c;">produktiv</div>
<div class="abs" style="left:75.00px;top:630.50px;width:1850.00px;height:1.40px;background:#e9e9eb"></div>
<div class="abs" style="left:93.30px;top:647.00px;width:19.60px;height:19.80px;border:1px solid #5c6ab0;box-shadow:inset 0 0 0 1px rgba(110,122,185,0.55);border-radius:4px;background:#fff"></div>
<div class="txt" style="left:156.50px;top:652.10px;font-size:14.3px;line-height:14.3px;color:#343a4c;">47977.002</div>
<div class="txt" style="left:278.70px;top:652.10px;font-size:14.3px;line-height:14.3px;color:#343a4c;">Service 47977.002</div>
<div class="txt" style="left:837.70px;top:652.10px;font-size:14.3px;line-height:14.3px;color:#343a4c;">Explicatis GmbH</div>
<div class="txt" style="left:990.00px;top:652.10px;font-size:14.3px;line-height:14.3px;color:#343a4c;">03.06.2024</div>
<div class="txt" style="left:1547.30px;top:652.10px;font-size:14.3px;line-height:14.3px;color:#343a4c;">produktiv</div>
<div class="abs" style="left:75.00px;top:683.50px;width:1850.00px;height:1.40px;background:#e9e9eb"></div>
<div class="abs" style="left:93.30px;top:700.00px;width:19.60px;height:19.80px;border:1px solid #5c6ab0;box-shadow:inset 0 0 0 1px rgba(110,122,185,0.55);border-radius:4px;background:#fff"></div>
<div class="txt" style="left:156.50px;top:705.10px;font-size:14.3px;line-height:14.3px;color:#343a4c;">47977.003</div>
<div class="txt" style="left:278.70px;top:705.10px;font-size:14.3px;line-height:14.3px;color:#343a4c;">Service 47977.003</div>
<div class="txt" style="left:454.20px;top:705.10px;font-size:14.3px;line-height:14.3px;color:#343a4c;">Nord Servicepoint Presswerkzeuge</div>
<div class="txt" style="left:837.70px;top:705.10px;font-size:14.3px;line-height:14.3px;color:#343a4c;">Explicatis GmbH</div>
<div class="txt" style="left:990.00px;top:705.10px;font-size:14.3px;line-height:14.3px;color:#343a4c;">03.06.2024</div>
<div class="txt" style="left:1547.30px;top:705.10px;font-size:14.3px;line-height:14.3px;color:#343a4c;">produktiv</div>
<div class="abs" style="left:75.00px;top:736.50px;width:1850.00px;height:1.40px;background:#e9e9eb"></div>
<div class="abs" style="left:93.30px;top:753.00px;width:19.60px;height:19.80px;border:1px solid #5c6ab0;box-shadow:inset 0 0 0 1px rgba(110,122,185,0.55);border-radius:4px;background:#fff"></div>
<div class="txt" style="left:156.50px;top:758.10px;font-size:14.3px;line-height:14.3px;color:#343a4c;">10102.002</div>
<div class="txt" style="left:278.70px;top:758.10px;font-size:14.3px;line-height:14.3px;color:#343a4c;">Vor-Ort-Service 1010...</div>
<div class="txt" style="left:454.20px;top:758.10px;font-size:14.3px;line-height:14.3px;color:#343a4c;">Nord Servicepoint Presswerkzeuge</div>
<div class="txt" style="left:837.70px;top:758.10px;font-size:14.3px;line-height:14.3px;color:#343a4c;">Kunde GmbH</div>
<div class="txt" style="left:990.00px;top:758.10px;font-size:14.3px;line-height:14.3px;color:#343a4c;">03.06.2024</div>
<div class="txt" style="left:1116.70px;top:758.10px;font-size:14.3px;line-height:14.3px;color:#343a4c;">31.07.2024</div>
<div class="txt" style="left:1547.30px;top:758.10px;font-size:14.3px;line-height:14.3px;color:#343a4c;">produktiv</div>
<div class="abs" style="left:75.00px;top:789.50px;width:1850.00px;height:1.40px;background:#e9e9eb"></div>
<div class="abs" style="left:93.30px;top:806.00px;width:19.60px;height:19.80px;border:1px solid #5c6ab0;box-shadow:inset 0 0 0 1px rgba(110,122,185,0.55);border-radius:4px;background:#fff"></div>
<div class="txt" style="left:156.50px;top:811.10px;font-size:14.3px;line-height:14.3px;color:#343a4c;">30066.001</div>
<div class="txt" style="left:278.70px;top:811.10px;font-size:14.3px;line-height:14.3px;color:#343a4c;">Service 30066.001</div>
<div class="txt" style="left:454.20px;top:811.10px;font-size:14.3px;line-height:14.3px;color:#343a4c;">Nord Servicepoint Presswerkzeuge</div>
<div class="txt" style="left:837.70px;top:811.10px;font-size:14.3px;line-height:14.3px;color:#343a4c;">Kunde 2 AG</div>
<div class="txt" style="left:990.00px;top:811.10px;font-size:14.3px;line-height:14.3px;color:#343a4c;">04.06.2024</div>
<div class="txt" style="left:1547.30px;top:811.10px;font-size:14.3px;line-height:14.3px;color:#343a4c;">produktiv</div>
<div class="abs" style="left:75.00px;top:842.50px;width:1850.00px;height:1.40px;background:#e9e9eb"></div>
<div class="abs" style="left:93.30px;top:859.00px;width:19.60px;height:19.80px;border:1px solid #5c6ab0;box-shadow:inset 0 0 0 1px rgba(110,122,185,0.55);border-radius:4px;background:#fff"></div>
<div class="txt" style="left:156.50px;top:864.10px;font-size:14.3px;line-height:14.3px;color:#343a4c;">47977.004</div>
<div class="txt" style="left:278.70px;top:864.10px;font-size:14.3px;line-height:14.3px;color:#343a4c;">Verkauf 47977.004</div>
<div class="txt" style="left:837.70px;top:864.10px;font-size:14.3px;line-height:14.3px;color:#343a4c;">Explicatis GmbH</div>
<div class="txt" style="left:990.00px;top:864.10px;font-size:14.3px;line-height:14.3px;color:#343a4c;">11.06.2024</div>
<div class="txt" style="left:1547.30px;top:864.10px;font-size:14.3px;line-height:14.3px;color:#343a4c;">produktiv</div>
<svg class="abs" style="left:1926px;top:366px" width="10" height="6"><path d="M1.5 5 L5 1.5 L8.5 5Z" fill="#a8a8a8"/></svg>
<div class="abs" style="left:1927.50px;top:373.80px;width:7.20px;height:337.00px;background:#bdbdbd"></div>
<svg class="abs" style="left:1926px;top:884px" width="10" height="6"><path d="M1.5 1 L5 4.5 L8.5 1Z" fill="#a8a8a8"/></svg>
<svg class="abs" style="left:77px;top:894px" width="6" height="10"><path d="M5 1.5 L1.5 5 L5 8.5Z" fill="#a8a8a8"/></svg>
<div class="abs" style="left:86.00px;top:895.80px;width:1308.50px;height:6.50px;background:#bdbdbd"></div>
<svg class="abs" style="left:1917px;top:894px" width="6" height="10"><path d="M1 1.5 L4.5 5 L1 8.5Z" fill="#a8a8a8"/></svg>
</div>
</body></html>
